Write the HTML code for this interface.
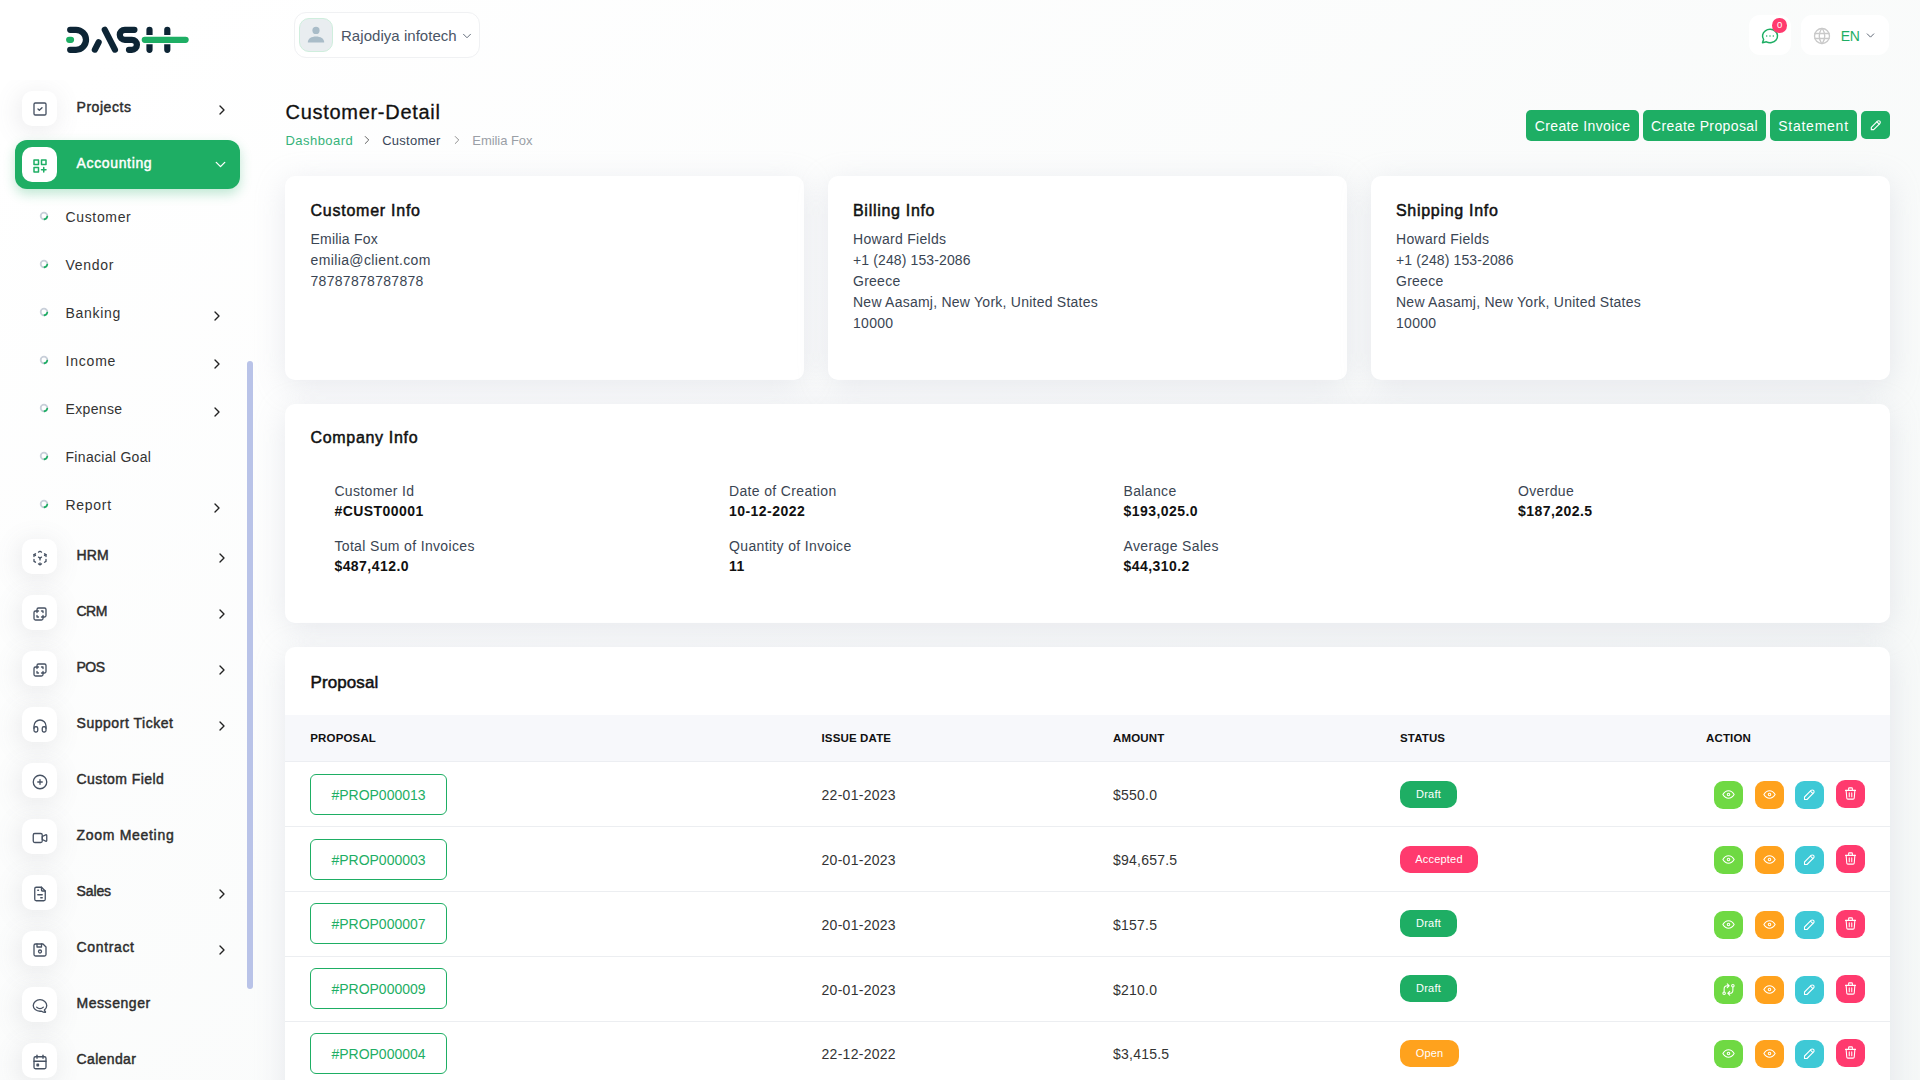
<!DOCTYPE html><html><head><meta charset="utf-8"><style>
*{margin:0;padding:0;box-sizing:border-box}
html,body{width:1920px;height:1080px;overflow:hidden}
body{position:relative;font-family:"Liberation Sans",sans-serif;background:#fff}
.bg{position:absolute;left:0;top:0;width:1920px;height:2400px;background:linear-gradient(141.55deg,rgba(240,244,243,0) 3.46%,#f0f4f3 99.86%),#fff}
.t{position:absolute;line-height:1;white-space:nowrap}
.ic{position:absolute;overflow:visible}
.ibox{position:absolute;width:35px;height:35px;border-radius:10px;background:#fff;box-shadow:-2px 4px 26px rgba(110,115,125,0.16)}
.card{position:absolute;background:#fff;border-radius:10px;box-shadow:0 6px 30px rgba(182,186,203,0.3)}
.btn{position:absolute;top:110px;height:30.5px;border-radius:5px;background:#1eae64;color:#fff;font-size:14px;line-height:32.5px;text-align:center;white-space:nowrap}
.pbtn{position:absolute;left:310px;width:137px;height:41px;border:1.3px solid #1eae64;border-radius:6px;color:#1eae64;font-size:14px;line-height:40px;text-align:center;letter-spacing:0}
.badge{position:absolute;left:1400px;height:27px;border-radius:10px;color:#fff;font-size:11px;line-height:27px;text-align:center;letter-spacing:0.2px}
.abtn{position:absolute;width:29px;height:28px;border-radius:9px}
</style></head><body><div class="bg"></div>
<svg class="ic" style="left:50px;top:10px;width:160px;height:60px" viewBox="0 0 160 60" fill="none" stroke-linecap="round" stroke-width="6.25">
<path stroke="#0d2535" d="M20.2 19.8H26A10 10 0 0 1 36 29.8A10 10 0 0 1 26 39.8H20.2"/>
<path stroke="#1eae64" d="M19.2 29.8H21"/>
<path stroke="#0d2535" d="M44.9 39.6L48.6 32.3"/>
<path stroke="#0d2535" d="M54.8 19.8L64.9 39.6"/>
<path stroke="#0d2535" d="M84.4 19.8H74.8A5 5 0 0 0 74.8 29.8H81.9A5 5 0 0 1 81.9 39.8H79"/>
<path fill="#0d2535" stroke="none" d="M96.4 25V19.8A3.1 3.1 0 0 1 102.6 19.8V25Z M96.4 34.2V39.8A3.1 3.1 0 0 0 102.6 39.8V34.2Z M114.2 25V19.8A3.1 3.1 0 0 1 120.4 19.8V25Z M114.2 34.2V39.8A3.1 3.1 0 0 0 120.4 39.8V34.2Z"/>
<path stroke="#1eae64" d="M94.8 29.8H135.6"/>
</svg>
<div style="position:absolute;left:0;top:80px;width:262px;height:1000px;overflow:hidden"><div style="position:absolute;left:0;top:-80px;width:262px;height:1080px">
<div class="ibox" style="left:22px;top:91px"></div>
<svg class="ic" style="left:31.8px;top:101.3px;width:16px;height:16px;" viewBox="0 0 24 24" fill="none" stroke="#475263" stroke-width="2" stroke-linecap="round" stroke-linejoin="round"><path d="M3 5a2 2 0 0 1 2 -2h14a2 2 0 0 1 2 2v14a2 2 0 0 1 -2 2h-14a2 2 0 0 1 -2 -2z"/><path d="M9 12l2 2l4 -4"/></svg>
<div class="t" style="left:76.5px;top:100.35px;font-size:14px;color:#2d2d2d;font-weight:400;letter-spacing:0.55px;-webkit-text-stroke:0.45px #2d2d2d;">Projects</div>
<svg class="ic" style="left:213.9px;top:102px;width:16px;height:16px;" viewBox="0 0 24 24" fill="none" stroke="#222" stroke-width="2" stroke-linecap="round" stroke-linejoin="round"><path d="M9 6l6 6l-6 6"/></svg>
<div style="position:absolute;left:15px;top:140px;width:225px;height:49px;border-radius:12px;background:#1eae64;box-shadow:0 5px 12px rgba(30,174,100,0.28)"></div>
<div style="position:absolute;left:22px;top:146.5px;width:35px;height:35.5px;border-radius:10px;background:#fff"></div>
<svg class="ic" style="left:30.9px;top:156.9px;width:18px;height:18px;" viewBox="0 0 24 24" fill="none" stroke="#1eae64" stroke-width="2" stroke-linecap="round" stroke-linejoin="round"><path d="M4 4h6v6h-6z"/><path d="M14 4h6v6h-6z"/><path d="M4 14h6v6h-6z"/><path d="M14 17h6m-3 -3v6"/></svg>
<div class="t" style="left:76.5px;top:156.45px;font-size:14px;color:#fff;font-weight:400;letter-spacing:0.65px;-webkit-text-stroke:0.45px #fff;">Accounting</div>
<svg class="ic" style="left:212px;top:156px;width:17px;height:17px;" viewBox="0 0 24 24" fill="none" stroke="#fff" stroke-width="1.9" stroke-linecap="round" stroke-linejoin="round"><path d="M6 9l6 6l6 -6"/></svg>
<svg class="ic" style="left:39.3px;top:211.4px;width:10px;height:10px" viewBox="0 0 10 10" fill="none" stroke-width="1.8"><circle cx="5" cy="5" r="3.3" stroke="#c8cfd9"/><path d="M8.25 5.57A3.3 3.3 0 0 1 5.57 8.25" stroke="#1eae64" stroke-linecap="round"/></svg>
<div class="t" style="left:65.5px;top:210.15px;font-size:14px;color:#333;font-weight:400;letter-spacing:0.65px;">Customer</div>
<svg class="ic" style="left:39.3px;top:259.4px;width:10px;height:10px" viewBox="0 0 10 10" fill="none" stroke-width="1.8"><circle cx="5" cy="5" r="3.3" stroke="#c8cfd9"/><path d="M8.25 5.57A3.3 3.3 0 0 1 5.57 8.25" stroke="#1eae64" stroke-linecap="round"/></svg>
<div class="t" style="left:65.5px;top:258.15px;font-size:14px;color:#333;font-weight:400;letter-spacing:0.7px;">Vendor</div>
<svg class="ic" style="left:39.3px;top:307.4px;width:10px;height:10px" viewBox="0 0 10 10" fill="none" stroke-width="1.8"><circle cx="5" cy="5" r="3.3" stroke="#c8cfd9"/><path d="M8.25 5.57A3.3 3.3 0 0 1 5.57 8.25" stroke="#1eae64" stroke-linecap="round"/></svg>
<div class="t" style="left:65.5px;top:306.15px;font-size:14px;color:#333;font-weight:400;letter-spacing:0.7px;">Banking</div>
<svg class="ic" style="left:208.9px;top:308px;width:16px;height:16px;" viewBox="0 0 24 24" fill="none" stroke="#222" stroke-width="2" stroke-linecap="round" stroke-linejoin="round"><path d="M9 6l6 6l-6 6"/></svg>
<svg class="ic" style="left:39.3px;top:355.4px;width:10px;height:10px" viewBox="0 0 10 10" fill="none" stroke-width="1.8"><circle cx="5" cy="5" r="3.3" stroke="#c8cfd9"/><path d="M8.25 5.57A3.3 3.3 0 0 1 5.57 8.25" stroke="#1eae64" stroke-linecap="round"/></svg>
<div class="t" style="left:65.5px;top:354.15px;font-size:14px;color:#333;font-weight:400;letter-spacing:0.8px;">Income</div>
<svg class="ic" style="left:208.9px;top:356px;width:16px;height:16px;" viewBox="0 0 24 24" fill="none" stroke="#222" stroke-width="2" stroke-linecap="round" stroke-linejoin="round"><path d="M9 6l6 6l-6 6"/></svg>
<svg class="ic" style="left:39.3px;top:403.4px;width:10px;height:10px" viewBox="0 0 10 10" fill="none" stroke-width="1.8"><circle cx="5" cy="5" r="3.3" stroke="#c8cfd9"/><path d="M8.25 5.57A3.3 3.3 0 0 1 5.57 8.25" stroke="#1eae64" stroke-linecap="round"/></svg>
<div class="t" style="left:65.5px;top:402.15px;font-size:14px;color:#333;font-weight:400;letter-spacing:0.35px;">Expense</div>
<svg class="ic" style="left:208.9px;top:404px;width:16px;height:16px;" viewBox="0 0 24 24" fill="none" stroke="#222" stroke-width="2" stroke-linecap="round" stroke-linejoin="round"><path d="M9 6l6 6l-6 6"/></svg>
<svg class="ic" style="left:39.3px;top:451.4px;width:10px;height:10px" viewBox="0 0 10 10" fill="none" stroke-width="1.8"><circle cx="5" cy="5" r="3.3" stroke="#c8cfd9"/><path d="M8.25 5.57A3.3 3.3 0 0 1 5.57 8.25" stroke="#1eae64" stroke-linecap="round"/></svg>
<div class="t" style="left:65.5px;top:450.15px;font-size:14px;color:#333;font-weight:400;letter-spacing:0.31px;">Finacial Goal</div>
<svg class="ic" style="left:39.3px;top:499.4px;width:10px;height:10px" viewBox="0 0 10 10" fill="none" stroke-width="1.8"><circle cx="5" cy="5" r="3.3" stroke="#c8cfd9"/><path d="M8.25 5.57A3.3 3.3 0 0 1 5.57 8.25" stroke="#1eae64" stroke-linecap="round"/></svg>
<div class="t" style="left:65.5px;top:498.15px;font-size:14px;color:#333;font-weight:400;letter-spacing:0.7px;">Report</div>
<svg class="ic" style="left:208.9px;top:500px;width:16px;height:16px;" viewBox="0 0 24 24" fill="none" stroke="#222" stroke-width="2" stroke-linecap="round" stroke-linejoin="round"><path d="M9 6l6 6l-6 6"/></svg>
<div class="ibox" style="left:22px;top:539.0px"></div>
<svg class="ic" style="left:30.7px;top:549.0px;width:18px;height:18px;" viewBox="0 0 24 24" fill="none" stroke="#475263" stroke-width="1.75" stroke-linecap="round" stroke-linejoin="round"><path d="M6 17.6l-2 -1.1v-2.5"/><path d="M4 10v-2.5l2 -1.1"/><path d="M10 4.1l2 -1.1l2 1.1"/><path d="M18 6.4l2 1.1v2.5"/><path d="M20 14v2.5l-2 1.12"/><path d="M14 19.9l-2 1.1l-2 -1.1"/><path d="M12 12l2 -1.1"/><path d="M18 8.6l2 -1.1"/><path d="M12 12l0 2.5"/><path d="M12 18.5l0 2.5"/><path d="M12 12l-2 -1.12"/><path d="M6 8.6l-2 -1.1"/></svg>
<div class="t" style="left:76.5px;top:548.15px;font-size:14px;color:#2d2d2d;font-weight:400;letter-spacing:0.2px;-webkit-text-stroke:0.45px #2d2d2d;">HRM</div>
<svg class="ic" style="left:213.9px;top:550.0px;width:16px;height:16px;" viewBox="0 0 24 24" fill="none" stroke="#222" stroke-width="2" stroke-linecap="round" stroke-linejoin="round"><path d="M9 6l6 6l-6 6"/></svg>
<div class="ibox" style="left:22px;top:595.0px"></div>
<svg class="ic" style="left:30.7px;top:605.0px;width:18px;height:18px;" viewBox="0 0 24 24" fill="none" stroke="#475263" stroke-width="1.75" stroke-linecap="round" stroke-linejoin="round"><path d="M16 16v2a2 2 0 0 1 -2 2h-8a2 2 0 0 1 -2 -2v-8a2 2 0 0 1 2 -2h2v-2a2 2 0 0 1 2 -2h8a2 2 0 0 1 2 2v8a2 2 0 0 1 -2 2h-2"/><path d="M10 8l-2 0l0 2"/><path d="M8 14l0 2l2 0"/><path d="M14 8l2 0l0 2"/><path d="M16 14l0 2l-2 0"/></svg>
<div class="t" style="left:76.5px;top:604.15px;font-size:14px;color:#2d2d2d;font-weight:400;letter-spacing:-0.5px;-webkit-text-stroke:0.45px #2d2d2d;">CRM</div>
<svg class="ic" style="left:213.9px;top:606.0px;width:16px;height:16px;" viewBox="0 0 24 24" fill="none" stroke="#222" stroke-width="2" stroke-linecap="round" stroke-linejoin="round"><path d="M9 6l6 6l-6 6"/></svg>
<div class="ibox" style="left:22px;top:651.0px"></div>
<svg class="ic" style="left:30.7px;top:661.0px;width:18px;height:18px;" viewBox="0 0 24 24" fill="none" stroke="#475263" stroke-width="1.75" stroke-linecap="round" stroke-linejoin="round"><path d="M16 16v2a2 2 0 0 1 -2 2h-8a2 2 0 0 1 -2 -2v-8a2 2 0 0 1 2 -2h2v-2a2 2 0 0 1 2 -2h8a2 2 0 0 1 2 2v8a2 2 0 0 1 -2 2h-2"/><path d="M10 8l-2 0l0 2"/><path d="M8 14l0 2l2 0"/><path d="M14 8l2 0l0 2"/><path d="M16 14l0 2l-2 0"/></svg>
<div class="t" style="left:76.5px;top:660.15px;font-size:14px;color:#2d2d2d;font-weight:400;letter-spacing:-0.5px;-webkit-text-stroke:0.45px #2d2d2d;">POS</div>
<svg class="ic" style="left:213.9px;top:662.0px;width:16px;height:16px;" viewBox="0 0 24 24" fill="none" stroke="#222" stroke-width="2" stroke-linecap="round" stroke-linejoin="round"><path d="M9 6l6 6l-6 6"/></svg>
<div class="ibox" style="left:22px;top:707.0px"></div>
<svg class="ic" style="left:30.7px;top:717.0px;width:18px;height:18px;" viewBox="0 0 24 24" fill="none" stroke="#475263" stroke-width="1.75" stroke-linecap="round" stroke-linejoin="round"><path d="M4 15a2 2 0 0 1 2 -2h1a2 2 0 0 1 2 2v3a2 2 0 0 1 -2 2h-1a2 2 0 0 1 -2 -2z"/><path d="M15 15a2 2 0 0 1 2 -2h1a2 2 0 0 1 2 2v3a2 2 0 0 1 -2 2h-1a2 2 0 0 1 -2 -2z"/><path d="M4 15v-3a8 8 0 0 1 16 0v3"/></svg>
<div class="t" style="left:76.5px;top:716.15px;font-size:14px;color:#2d2d2d;font-weight:400;letter-spacing:0.54px;-webkit-text-stroke:0.45px #2d2d2d;">Support Ticket</div>
<svg class="ic" style="left:213.9px;top:718.0px;width:16px;height:16px;" viewBox="0 0 24 24" fill="none" stroke="#222" stroke-width="2" stroke-linecap="round" stroke-linejoin="round"><path d="M9 6l6 6l-6 6"/></svg>
<div class="ibox" style="left:22px;top:763.0px"></div>
<svg class="ic" style="left:30.7px;top:773.0px;width:18px;height:18px;" viewBox="0 0 24 24" fill="none" stroke="#475263" stroke-width="1.75" stroke-linecap="round" stroke-linejoin="round"><path d="M3 12a9 9 0 1 0 18 0a9 9 0 0 0 -18 0"/><path d="M9 12h6"/><path d="M12 9v6"/></svg>
<div class="t" style="left:76.5px;top:772.15px;font-size:14px;color:#2d2d2d;font-weight:400;letter-spacing:0.44px;-webkit-text-stroke:0.45px #2d2d2d;">Custom Field</div>
<div class="ibox" style="left:22px;top:819.0px"></div>
<svg class="ic" style="left:30.7px;top:829.0px;width:18px;height:18px;" viewBox="0 0 24 24" fill="none" stroke="#475263" stroke-width="1.75" stroke-linecap="round" stroke-linejoin="round"><path d="M15 10l4.553 -2.276a1 1 0 0 1 1.447 .894v6.764a1 1 0 0 1 -1.447 .894l-4.553 -2.276v-4z"/><path d="M3 8a2 2 0 0 1 2 -2h8a2 2 0 0 1 2 2v8a2 2 0 0 1 -2 2h-8a2 2 0 0 1 -2 -2z"/></svg>
<div class="t" style="left:76.5px;top:828.15px;font-size:14px;color:#2d2d2d;font-weight:400;letter-spacing:0.7px;-webkit-text-stroke:0.45px #2d2d2d;">Zoom Meeting</div>
<div class="ibox" style="left:22px;top:875.0px"></div>
<svg class="ic" style="left:30.7px;top:885.0px;width:18px;height:18px;" viewBox="0 0 24 24" fill="none" stroke="#475263" stroke-width="1.75" stroke-linecap="round" stroke-linejoin="round"><path d="M14 3v4a1 1 0 0 0 1 1h4"/><path d="M17 21h-10a2 2 0 0 1 -2 -2v-14a2 2 0 0 1 2 -2h7l5 5v11a2 2 0 0 1 -2 2z"/><path d="M9 7l1 0"/><path d="M9 13l6 0"/><path d="M13 17l2 0"/></svg>
<div class="t" style="left:76.5px;top:884.15px;font-size:14px;color:#2d2d2d;font-weight:400;letter-spacing:-0.1px;-webkit-text-stroke:0.45px #2d2d2d;">Sales</div>
<svg class="ic" style="left:213.9px;top:886.0px;width:16px;height:16px;" viewBox="0 0 24 24" fill="none" stroke="#222" stroke-width="2" stroke-linecap="round" stroke-linejoin="round"><path d="M9 6l6 6l-6 6"/></svg>
<div class="ibox" style="left:22px;top:931.0px"></div>
<svg class="ic" style="left:30.7px;top:941.0px;width:18px;height:18px;" viewBox="0 0 24 24" fill="none" stroke="#475263" stroke-width="1.75" stroke-linecap="round" stroke-linejoin="round"><path d="M6 4h10l4 4v10a2 2 0 0 1 -2 2h-12a2 2 0 0 1 -2 -2v-12a2 2 0 0 1 2 -2"/><path d="M10 14a2 2 0 1 0 4 0a2 2 0 1 0 -4 0"/><path d="M14 4l0 4l-6 0l0 -4"/></svg>
<div class="t" style="left:76.5px;top:940.15px;font-size:14px;color:#2d2d2d;font-weight:400;letter-spacing:0.65px;-webkit-text-stroke:0.45px #2d2d2d;">Contract</div>
<svg class="ic" style="left:213.9px;top:942.0px;width:16px;height:16px;" viewBox="0 0 24 24" fill="none" stroke="#222" stroke-width="2" stroke-linecap="round" stroke-linejoin="round"><path d="M9 6l6 6l-6 6"/></svg>
<div class="ibox" style="left:22px;top:987.0px"></div>
<svg class="ic" style="left:30.7px;top:997.0px;width:18px;height:18px;" viewBox="0 0 24 24" fill="none" stroke="#475263" stroke-width="1.75" stroke-linecap="round" stroke-linejoin="round"><path d="M17.802 17.292s.077 -.055 .2 -.149c1.843 -1.425 3 -3.49 3 -5.789c0 -4.286 -4.03 -7.764 -9 -7.764c-4.97 0 -9 3.478 -9 7.764c0 4.288 4.03 7.646 9 7.646c.424 0 1.12 -.028 2.088 -.084c1.262 .82 3.104 1.493 4.716 1.493c.499 0 .734 -.41 .414 -.828c-.486 -.596 -1.156 -1.551 -1.416 -2.29z"/><path d="M7.5 13.5c2.5 2.5 6.5 2.5 9 0"/></svg>
<div class="t" style="left:76.5px;top:996.15px;font-size:14px;color:#2d2d2d;font-weight:400;letter-spacing:0.55px;-webkit-text-stroke:0.45px #2d2d2d;">Messenger</div>
<div class="ibox" style="left:22px;top:1043.0px"></div>
<svg class="ic" style="left:30.7px;top:1053.0px;width:18px;height:18px;" viewBox="0 0 24 24" fill="none" stroke="#475263" stroke-width="1.75" stroke-linecap="round" stroke-linejoin="round"><path d="M4 7a2 2 0 0 1 2 -2h12a2 2 0 0 1 2 2v12a2 2 0 0 1 -2 2h-12a2 2 0 0 1 -2 -2z"/><path d="M16 3l0 4"/><path d="M8 3l0 4"/><path d="M4 11l16 0"/><path d="M8 15h2v2h-2z"/></svg>
<div class="t" style="left:76.5px;top:1052.15px;font-size:14px;color:#2d2d2d;font-weight:400;letter-spacing:0.37px;-webkit-text-stroke:0.45px #2d2d2d;">Calendar</div>
</div></div>
<div style="position:absolute;left:247px;top:361px;width:6px;height:628px;border-radius:3px;background:#b9c3e8"></div>
<div style="position:absolute;left:294px;top:12px;width:185.5px;height:45.5px;border-radius:12px;background:#fff;border:1px solid #f0f1f3;box-sizing:border-box"></div>
<div style="position:absolute;left:299px;top:18px;width:33.5px;height:33.5px;border-radius:10px;background:#e9edf0;border:1px solid #cfeedd;box-sizing:border-box;overflow:hidden"><svg style="position:absolute;left:7px;top:7px;width:18px;height:18px" viewBox="0 0 18 18"><circle cx="9" cy="4.4" r="3.6" fill="#a9bcc8"/><path d="M0.8 16.6C0.8 12.6 4.5 10.6 9 10.6S17.2 12.6 17.2 16.6Z" fill="#a9bcc8"/></svg></div>
<div class="t" style="left:341px;top:28.40px;font-size:15px;color:#4a5566;font-weight:400;letter-spacing:0.04px;">Rajodiya infotech</div>
<svg class="ic" style="left:460px;top:28.5px;width:14px;height:14px;" viewBox="0 0 24 24" fill="none" stroke="#5a6472" stroke-width="1.6" stroke-linecap="round" stroke-linejoin="round"><path d="M6 9l6 6l6 -6"/></svg>
<div style="position:absolute;left:1749px;top:15px;width:42px;height:40px;border-radius:11px;background:#fff"></div>
<svg class="ic" style="left:1759.5px;top:26px;width:20px;height:20px;" viewBox="0 0 24 24" fill="none" stroke="#1eae64" stroke-width="1.8" stroke-linecap="round" stroke-linejoin="round"><path d="M3 20l1.3 -3.9c-2.324 -3.437 -1.426 -7.872 2.1 -10.374c3.526 -2.501 8.59 -2.296 11.845 .48c3.255 2.777 3.695 7.266 1.029 10.501c-2.666 3.235 -7.615 4.215 -11.574 2.293l-4.7 1"/><path d="M12 12v.01"/><path d="M8 12v.01"/><path d="M16 12v.01"/></svg>
<div style="position:absolute;left:1772.3px;top:18px;width:14.5px;height:14.5px;border-radius:50%;background:#ff3a6e;color:#fff;font-size:9.5px;line-height:14.5px;text-align:center">0</div>
<div style="position:absolute;left:1801px;top:15px;width:88px;height:40px;border-radius:11px;background:#fff"></div>
<svg class="ic" style="left:1812px;top:25.5px;width:20px;height:20px;" viewBox="0 0 24 24" fill="none" stroke="#c9c9c9" stroke-width="1.6" stroke-linecap="round" stroke-linejoin="round"><path d="M3 12a9 9 0 1 0 18 0a9 9 0 0 0 -18 0"/><path d="M3.6 9h16.8"/><path d="M3.6 15h16.8"/><path d="M11.5 3a17 17 0 0 0 0 18"/><path d="M12.5 3a17 17 0 0 1 0 18"/></svg>
<div class="t" style="left:1840.8px;top:29.15px;font-size:14px;color:#1eae64;font-weight:400;letter-spacing:-0.5px;">EN</div>
<svg class="ic" style="left:1864px;top:28.5px;width:13px;height:13px;" viewBox="0 0 24 24" fill="none" stroke="#5a6472" stroke-width="1.8" stroke-linecap="round" stroke-linejoin="round"><path d="M6 9l6 6l6 -6"/></svg>
<div class="t" style="left:285.5px;top:101.77px;font-size:20px;color:#111;font-weight:400;letter-spacing:0.71px;-webkit-text-stroke:0.3px #111;">Customer-Detail</div>
<div class="t" style="left:285.5px;top:134.00px;font-size:13px;color:#36b37a;font-weight:400;letter-spacing:0.45px;">Dashboard</div>
<svg class="ic" style="left:359.5px;top:132.5px;width:14px;height:14px;" viewBox="0 0 24 24" fill="none" stroke="#555" stroke-width="1.6" stroke-linecap="round" stroke-linejoin="round"><path d="M9 6l6 6l-6 6"/></svg>
<div class="t" style="left:382.2px;top:134.00px;font-size:13px;color:#3a4658;font-weight:400;letter-spacing:0.25px;">Customer</div>
<svg class="ic" style="left:449.5px;top:132.5px;width:14px;height:14px;" viewBox="0 0 24 24" fill="none" stroke="#888" stroke-width="1.6" stroke-linecap="round" stroke-linejoin="round"><path d="M9 6l6 6l-6 6"/></svg>
<div class="t" style="left:472.3px;top:134.00px;font-size:13px;color:#9a9fa6;font-weight:400;letter-spacing:-0.05px;">Emilia Fox</div>
<div class="btn" style="left:1526px;width:113px;letter-spacing:0.38px">Create Invoice</div>
<div class="btn" style="left:1643px;width:123px;letter-spacing:0.38px">Create Proposal</div>
<div class="btn" style="left:1770px;width:87px;letter-spacing:0.75px">Statement</div>
<div style="position:absolute;left:1861px;top:111px;width:29px;height:28px;border-radius:5px;background:#1eae64"></div>
<svg class="ic" style="left:1868.5px;top:118px;width:14px;height:14px;" viewBox="0 0 24 24" fill="none" stroke="#fff" stroke-width="2" stroke-linecap="round" stroke-linejoin="round"><path d="M4 20h4l10.5 -10.5a2.828 2.828 0 1 0 -4 -4l-10.5 10.5v4"/><path d="M13.5 6.5l4 4"/></svg>
<div class="card" style="left:285px;top:176px;width:518.5px;height:203.5px"></div>
<div class="card" style="left:828px;top:176px;width:518.5px;height:203.5px"></div>
<div class="card" style="left:1371px;top:176px;width:519px;height:203.5px"></div>
<div class="card" style="left:285px;top:404px;width:1605px;height:219px"></div>
<div class="card" style="left:285px;top:647px;width:1605px;height:500px"></div>
<div class="t" style="left:310.5px;top:203.46px;font-size:16px;color:#111;font-weight:400;letter-spacing:0.75px;-webkit-text-stroke:0.5px #111;">Customer Info</div>
<div class="t" style="left:310.5px;top:231.85px;font-size:14px;color:#3a4553;font-weight:400;letter-spacing:0.2px;">Emilia Fox</div>
<div class="t" style="left:310.5px;top:252.85px;font-size:14px;color:#3a4553;font-weight:400;letter-spacing:0.38px;">emilia@client.com</div>
<div class="t" style="left:310.5px;top:273.85px;font-size:14px;color:#3a4553;font-weight:400;letter-spacing:0.3px;">78787878787878</div>
<div class="t" style="left:853px;top:203.46px;font-size:16px;color:#111;font-weight:400;letter-spacing:0.7px;-webkit-text-stroke:0.5px #111;">Billing Info</div>
<div class="t" style="left:853px;top:231.85px;font-size:14px;color:#3a4553;font-weight:400;letter-spacing:0.3px;">Howard Fields</div>
<div class="t" style="left:853px;top:252.85px;font-size:14px;color:#3a4553;font-weight:400;letter-spacing:0.12px;">+1 (248) 153-2086</div>
<div class="t" style="left:853px;top:273.85px;font-size:14px;color:#3a4553;font-weight:400;letter-spacing:0.26px;">Greece</div>
<div class="t" style="left:853px;top:294.85px;font-size:14px;color:#3a4553;font-weight:400;letter-spacing:0.24px;">New Aasamj, New York, United States</div>
<div class="t" style="left:853px;top:315.85px;font-size:14px;color:#3a4553;font-weight:400;letter-spacing:0.28px;">10000</div>
<div class="t" style="left:1396px;top:203.46px;font-size:16px;color:#111;font-weight:400;letter-spacing:0.7px;-webkit-text-stroke:0.5px #111;">Shipping Info</div>
<div class="t" style="left:1396px;top:231.85px;font-size:14px;color:#3a4553;font-weight:400;letter-spacing:0.3px;">Howard Fields</div>
<div class="t" style="left:1396px;top:252.85px;font-size:14px;color:#3a4553;font-weight:400;letter-spacing:0.12px;">+1 (248) 153-2086</div>
<div class="t" style="left:1396px;top:273.85px;font-size:14px;color:#3a4553;font-weight:400;letter-spacing:0.26px;">Greece</div>
<div class="t" style="left:1396px;top:294.85px;font-size:14px;color:#3a4553;font-weight:400;letter-spacing:0.24px;">New Aasamj, New York, United States</div>
<div class="t" style="left:1396px;top:315.85px;font-size:14px;color:#3a4553;font-weight:400;letter-spacing:0.28px;">10000</div>
<div class="t" style="left:310.5px;top:430.16px;font-size:16px;color:#111;font-weight:400;letter-spacing:0.68px;-webkit-text-stroke:0.5px #111;">Company Info</div>
<div class="t" style="left:334.4px;top:484.05px;font-size:14px;color:#3a4553;font-weight:400;letter-spacing:0.35px;">Customer Id</div>
<div class="t" style="left:334.4px;top:504.15px;font-size:14px;color:#111;font-weight:700;letter-spacing:0.45px;">#CUST00001</div>
<div class="t" style="left:729px;top:484.05px;font-size:14px;color:#3a4553;font-weight:400;letter-spacing:0.35px;">Date of Creation</div>
<div class="t" style="left:729px;top:504.15px;font-size:14px;color:#111;font-weight:700;letter-spacing:0.45px;">10-12-2022</div>
<div class="t" style="left:1123.5px;top:484.05px;font-size:14px;color:#3a4553;font-weight:400;letter-spacing:0.35px;">Balance</div>
<div class="t" style="left:1123.5px;top:504.15px;font-size:14px;color:#111;font-weight:700;letter-spacing:0.45px;">$193,025.0</div>
<div class="t" style="left:1518px;top:484.05px;font-size:14px;color:#3a4553;font-weight:400;letter-spacing:0.35px;">Overdue</div>
<div class="t" style="left:1518px;top:504.15px;font-size:14px;color:#111;font-weight:700;letter-spacing:0.45px;">$187,202.5</div>
<div class="t" style="left:334.4px;top:538.85px;font-size:14px;color:#3a4553;font-weight:400;letter-spacing:0.35px;">Total Sum of Invoices</div>
<div class="t" style="left:334.4px;top:558.85px;font-size:14px;color:#111;font-weight:700;letter-spacing:0.45px;">$487,412.0</div>
<div class="t" style="left:729px;top:538.85px;font-size:14px;color:#3a4553;font-weight:400;letter-spacing:0.35px;">Quantity of Invoice</div>
<div class="t" style="left:729px;top:558.85px;font-size:14px;color:#111;font-weight:700;letter-spacing:0.45px;">11</div>
<div class="t" style="left:1123.5px;top:538.85px;font-size:14px;color:#3a4553;font-weight:400;letter-spacing:0.35px;">Average Sales</div>
<div class="t" style="left:1123.5px;top:558.85px;font-size:14px;color:#111;font-weight:700;letter-spacing:0.45px;">$44,310.2</div>
<div class="t" style="left:310.5px;top:673.71px;font-size:17px;color:#111;font-weight:400;letter-spacing:0.1px;-webkit-text-stroke:0.5px #111;">Proposal</div>
<div style="position:absolute;left:285px;top:715px;width:1605px;height:47px;background:#f7f8fb;border-bottom:1px solid #eceef2"></div>
<div class="t" style="left:310.3px;top:732.87px;font-size:11.5px;color:#111;font-weight:700;letter-spacing:0.15px;">PROPOSAL</div>
<div class="t" style="left:821.5px;top:732.87px;font-size:11.5px;color:#111;font-weight:700;letter-spacing:0.15px;">ISSUE DATE</div>
<div class="t" style="left:1113.1px;top:732.87px;font-size:11.5px;color:#111;font-weight:700;letter-spacing:0.15px;">AMOUNT</div>
<div class="t" style="left:1400px;top:732.87px;font-size:11.5px;color:#111;font-weight:700;letter-spacing:0.15px;">STATUS</div>
<div class="t" style="left:1706px;top:732.87px;font-size:11.5px;color:#111;font-weight:700;letter-spacing:0.15px;">ACTION</div>
<div class="pbtn" style="top:773.9px">#PROP000013</div>
<div class="t" style="left:821.5px;top:788.35px;font-size:14px;color:#333;font-weight:400;letter-spacing:0.28px;">22-01-2023</div>
<div class="t" style="left:1113.1px;top:788.35px;font-size:14px;color:#333;font-weight:400;letter-spacing:0.22px;">$550.0</div>
<div class="badge" style="top:780.9px;width:57px;background:#1eae64">Draft</div>
<div class="abtn" style="left:1714.0px;top:781.4px;background:#6fd943"></div>
<svg class="ic" style="left:1721.0px;top:787.4px;width:15px;height:15px;" viewBox="0 0 24 24" fill="none" stroke="#fff" stroke-width="1.7" stroke-linecap="round" stroke-linejoin="round"><path d="M10 12a2 2 0 1 0 4 0a2 2 0 0 0 -4 0"/><path d="M21 12c-2.4 4 -5.4 6 -9 6c-3.6 0 -6.6 -2 -9 -6c2.4 -4 5.4 -6 9 -6c3.6 0 6.6 2 9 6"/></svg>
<div class="abtn" style="left:1754.7px;top:781.4px;background:#ffa21d"></div>
<svg class="ic" style="left:1761.7px;top:787.4px;width:15px;height:15px;" viewBox="0 0 24 24" fill="none" stroke="#fff" stroke-width="1.7" stroke-linecap="round" stroke-linejoin="round"><path d="M10 12a2 2 0 1 0 4 0a2 2 0 0 0 -4 0"/><path d="M21 12c-2.4 4 -5.4 6 -9 6c-3.6 0 -6.6 -2 -9 -6c2.4 -4 5.4 -6 9 -6c3.6 0 6.6 2 9 6"/></svg>
<div class="abtn" style="left:1795.4px;top:781.4px;background:#3ec9d6"></div>
<svg class="ic" style="left:1802.4px;top:787.4px;width:15px;height:15px;" viewBox="0 0 24 24" fill="none" stroke="#fff" stroke-width="1.7" stroke-linecap="round" stroke-linejoin="round"><path d="M4 20h4l10.5 -10.5a2.828 2.828 0 1 0 -4 -4l-10.5 10.5v4"/><path d="M13.5 6.5l4 4"/></svg>
<div class="abtn" style="left:1836.1px;top:780.4px;background:#ff3a6e"></div>
<svg class="ic" style="left:1843.1px;top:786.4px;width:15px;height:15px;" viewBox="0 0 24 24" fill="none" stroke="#fff" stroke-width="1.7" stroke-linecap="round" stroke-linejoin="round"><path d="M4 7l16 0"/><path d="M10 11l0 6"/><path d="M14 11l0 6"/><path d="M5 7l1 12a2 2 0 0 0 2 2h8a2 2 0 0 0 2 -2l1 -12"/><path d="M9 7v-3a1 1 0 0 1 1 -1h4a1 1 0 0 1 1 1v3"/></svg>
<div style="position:absolute;left:285px;top:826.0px;width:1605px;height:1px;background:#eceef1"></div>
<div class="pbtn" style="top:838.6px">#PROP000003</div>
<div class="t" style="left:821.5px;top:853.10px;font-size:14px;color:#333;font-weight:400;letter-spacing:0.28px;">20-01-2023</div>
<div class="t" style="left:1113.1px;top:853.10px;font-size:14px;color:#333;font-weight:400;letter-spacing:0.22px;">$94,657.5</div>
<div class="badge" style="top:845.6px;width:78px;background:#ff3a6e">Accepted</div>
<div class="abtn" style="left:1714.0px;top:846.1px;background:#6fd943"></div>
<svg class="ic" style="left:1721.0px;top:852.15px;width:15px;height:15px;" viewBox="0 0 24 24" fill="none" stroke="#fff" stroke-width="1.7" stroke-linecap="round" stroke-linejoin="round"><path d="M10 12a2 2 0 1 0 4 0a2 2 0 0 0 -4 0"/><path d="M21 12c-2.4 4 -5.4 6 -9 6c-3.6 0 -6.6 -2 -9 -6c2.4 -4 5.4 -6 9 -6c3.6 0 6.6 2 9 6"/></svg>
<div class="abtn" style="left:1754.7px;top:846.1px;background:#ffa21d"></div>
<svg class="ic" style="left:1761.7px;top:852.15px;width:15px;height:15px;" viewBox="0 0 24 24" fill="none" stroke="#fff" stroke-width="1.7" stroke-linecap="round" stroke-linejoin="round"><path d="M10 12a2 2 0 1 0 4 0a2 2 0 0 0 -4 0"/><path d="M21 12c-2.4 4 -5.4 6 -9 6c-3.6 0 -6.6 -2 -9 -6c2.4 -4 5.4 -6 9 -6c3.6 0 6.6 2 9 6"/></svg>
<div class="abtn" style="left:1795.4px;top:846.1px;background:#3ec9d6"></div>
<svg class="ic" style="left:1802.4px;top:852.15px;width:15px;height:15px;" viewBox="0 0 24 24" fill="none" stroke="#fff" stroke-width="1.7" stroke-linecap="round" stroke-linejoin="round"><path d="M4 20h4l10.5 -10.5a2.828 2.828 0 1 0 -4 -4l-10.5 10.5v4"/><path d="M13.5 6.5l4 4"/></svg>
<div class="abtn" style="left:1836.1px;top:845.1px;background:#ff3a6e"></div>
<svg class="ic" style="left:1843.1px;top:851.15px;width:15px;height:15px;" viewBox="0 0 24 24" fill="none" stroke="#fff" stroke-width="1.7" stroke-linecap="round" stroke-linejoin="round"><path d="M4 7l16 0"/><path d="M10 11l0 6"/><path d="M14 11l0 6"/><path d="M5 7l1 12a2 2 0 0 0 2 2h8a2 2 0 0 0 2 -2l1 -12"/><path d="M9 7v-3a1 1 0 0 1 1 -1h4a1 1 0 0 1 1 1v3"/></svg>
<div style="position:absolute;left:285px;top:891.0px;width:1605px;height:1px;background:#eceef1"></div>
<div class="pbtn" style="top:903.4px">#PROP000007</div>
<div class="t" style="left:821.5px;top:917.85px;font-size:14px;color:#333;font-weight:400;letter-spacing:0.28px;">20-01-2023</div>
<div class="t" style="left:1113.1px;top:917.85px;font-size:14px;color:#333;font-weight:400;letter-spacing:0.22px;">$157.5</div>
<div class="badge" style="top:910.4px;width:57px;background:#1eae64">Draft</div>
<div class="abtn" style="left:1714.0px;top:910.9px;background:#6fd943"></div>
<svg class="ic" style="left:1721.0px;top:916.9px;width:15px;height:15px;" viewBox="0 0 24 24" fill="none" stroke="#fff" stroke-width="1.7" stroke-linecap="round" stroke-linejoin="round"><path d="M10 12a2 2 0 1 0 4 0a2 2 0 0 0 -4 0"/><path d="M21 12c-2.4 4 -5.4 6 -9 6c-3.6 0 -6.6 -2 -9 -6c2.4 -4 5.4 -6 9 -6c3.6 0 6.6 2 9 6"/></svg>
<div class="abtn" style="left:1754.7px;top:910.9px;background:#ffa21d"></div>
<svg class="ic" style="left:1761.7px;top:916.9px;width:15px;height:15px;" viewBox="0 0 24 24" fill="none" stroke="#fff" stroke-width="1.7" stroke-linecap="round" stroke-linejoin="round"><path d="M10 12a2 2 0 1 0 4 0a2 2 0 0 0 -4 0"/><path d="M21 12c-2.4 4 -5.4 6 -9 6c-3.6 0 -6.6 -2 -9 -6c2.4 -4 5.4 -6 9 -6c3.6 0 6.6 2 9 6"/></svg>
<div class="abtn" style="left:1795.4px;top:910.9px;background:#3ec9d6"></div>
<svg class="ic" style="left:1802.4px;top:916.9px;width:15px;height:15px;" viewBox="0 0 24 24" fill="none" stroke="#fff" stroke-width="1.7" stroke-linecap="round" stroke-linejoin="round"><path d="M4 20h4l10.5 -10.5a2.828 2.828 0 1 0 -4 -4l-10.5 10.5v4"/><path d="M13.5 6.5l4 4"/></svg>
<div class="abtn" style="left:1836.1px;top:909.9px;background:#ff3a6e"></div>
<svg class="ic" style="left:1843.1px;top:915.9px;width:15px;height:15px;" viewBox="0 0 24 24" fill="none" stroke="#fff" stroke-width="1.7" stroke-linecap="round" stroke-linejoin="round"><path d="M4 7l16 0"/><path d="M10 11l0 6"/><path d="M14 11l0 6"/><path d="M5 7l1 12a2 2 0 0 0 2 2h8a2 2 0 0 0 2 -2l1 -12"/><path d="M9 7v-3a1 1 0 0 1 1 -1h4a1 1 0 0 1 1 1v3"/></svg>
<div style="position:absolute;left:285px;top:956.0px;width:1605px;height:1px;background:#eceef1"></div>
<div class="pbtn" style="top:968.1px">#PROP000009</div>
<div class="t" style="left:821.5px;top:982.60px;font-size:14px;color:#333;font-weight:400;letter-spacing:0.28px;">20-01-2023</div>
<div class="t" style="left:1113.1px;top:982.60px;font-size:14px;color:#333;font-weight:400;letter-spacing:0.22px;">$210.0</div>
<div class="badge" style="top:975.1px;width:57px;background:#1eae64">Draft</div>
<div class="abtn" style="left:1714.0px;top:975.6px;background:#6fd943"></div>
<svg class="ic" style="left:1721.0px;top:981.65px;width:15px;height:15px;" viewBox="0 0 24 24" fill="none" stroke="#fff" stroke-width="1.7" stroke-linecap="round" stroke-linejoin="round"><path d="M3 18a2 2 0 1 0 4 0a2 2 0 1 0 -4 0"/><path d="M17 6a2 2 0 1 0 4 0a2 2 0 1 0 -4 0"/><path d="M19 8v5a5 5 0 0 1 -5 5h-3l3 -3m0 6l-3 -3"/><path d="M5 16v-5a5 5 0 0 1 5 -5h3l-3 -3m0 6l3 -3"/></svg>
<div class="abtn" style="left:1754.7px;top:975.6px;background:#ffa21d"></div>
<svg class="ic" style="left:1761.7px;top:981.65px;width:15px;height:15px;" viewBox="0 0 24 24" fill="none" stroke="#fff" stroke-width="1.7" stroke-linecap="round" stroke-linejoin="round"><path d="M10 12a2 2 0 1 0 4 0a2 2 0 0 0 -4 0"/><path d="M21 12c-2.4 4 -5.4 6 -9 6c-3.6 0 -6.6 -2 -9 -6c2.4 -4 5.4 -6 9 -6c3.6 0 6.6 2 9 6"/></svg>
<div class="abtn" style="left:1795.4px;top:975.6px;background:#3ec9d6"></div>
<svg class="ic" style="left:1802.4px;top:981.65px;width:15px;height:15px;" viewBox="0 0 24 24" fill="none" stroke="#fff" stroke-width="1.7" stroke-linecap="round" stroke-linejoin="round"><path d="M4 20h4l10.5 -10.5a2.828 2.828 0 1 0 -4 -4l-10.5 10.5v4"/><path d="M13.5 6.5l4 4"/></svg>
<div class="abtn" style="left:1836.1px;top:974.6px;background:#ff3a6e"></div>
<svg class="ic" style="left:1843.1px;top:980.65px;width:15px;height:15px;" viewBox="0 0 24 24" fill="none" stroke="#fff" stroke-width="1.7" stroke-linecap="round" stroke-linejoin="round"><path d="M4 7l16 0"/><path d="M10 11l0 6"/><path d="M14 11l0 6"/><path d="M5 7l1 12a2 2 0 0 0 2 2h8a2 2 0 0 0 2 -2l1 -12"/><path d="M9 7v-3a1 1 0 0 1 1 -1h4a1 1 0 0 1 1 1v3"/></svg>
<div style="position:absolute;left:285px;top:1021.0px;width:1605px;height:1px;background:#eceef1"></div>
<div class="pbtn" style="top:1032.9px">#PROP000004</div>
<div class="t" style="left:821.5px;top:1047.35px;font-size:14px;color:#333;font-weight:400;letter-spacing:0.28px;">22-12-2022</div>
<div class="t" style="left:1113.1px;top:1047.35px;font-size:14px;color:#333;font-weight:400;letter-spacing:0.22px;">$3,415.5</div>
<div class="badge" style="top:1039.9px;width:59px;background:#ffa21d">Open</div>
<div class="abtn" style="left:1714.0px;top:1040.4px;background:#6fd943"></div>
<svg class="ic" style="left:1721.0px;top:1046.4px;width:15px;height:15px;" viewBox="0 0 24 24" fill="none" stroke="#fff" stroke-width="1.7" stroke-linecap="round" stroke-linejoin="round"><path d="M10 12a2 2 0 1 0 4 0a2 2 0 0 0 -4 0"/><path d="M21 12c-2.4 4 -5.4 6 -9 6c-3.6 0 -6.6 -2 -9 -6c2.4 -4 5.4 -6 9 -6c3.6 0 6.6 2 9 6"/></svg>
<div class="abtn" style="left:1754.7px;top:1040.4px;background:#ffa21d"></div>
<svg class="ic" style="left:1761.7px;top:1046.4px;width:15px;height:15px;" viewBox="0 0 24 24" fill="none" stroke="#fff" stroke-width="1.7" stroke-linecap="round" stroke-linejoin="round"><path d="M10 12a2 2 0 1 0 4 0a2 2 0 0 0 -4 0"/><path d="M21 12c-2.4 4 -5.4 6 -9 6c-3.6 0 -6.6 -2 -9 -6c2.4 -4 5.4 -6 9 -6c3.6 0 6.6 2 9 6"/></svg>
<div class="abtn" style="left:1795.4px;top:1040.4px;background:#3ec9d6"></div>
<svg class="ic" style="left:1802.4px;top:1046.4px;width:15px;height:15px;" viewBox="0 0 24 24" fill="none" stroke="#fff" stroke-width="1.7" stroke-linecap="round" stroke-linejoin="round"><path d="M4 20h4l10.5 -10.5a2.828 2.828 0 1 0 -4 -4l-10.5 10.5v4"/><path d="M13.5 6.5l4 4"/></svg>
<div class="abtn" style="left:1836.1px;top:1039.4px;background:#ff3a6e"></div>
<svg class="ic" style="left:1843.1px;top:1045.4px;width:15px;height:15px;" viewBox="0 0 24 24" fill="none" stroke="#fff" stroke-width="1.7" stroke-linecap="round" stroke-linejoin="round"><path d="M4 7l16 0"/><path d="M10 11l0 6"/><path d="M14 11l0 6"/><path d="M5 7l1 12a2 2 0 0 0 2 2h8a2 2 0 0 0 2 -2l1 -12"/><path d="M9 7v-3a1 1 0 0 1 1 -1h4a1 1 0 0 1 1 1v3"/></svg>
</body></html>
